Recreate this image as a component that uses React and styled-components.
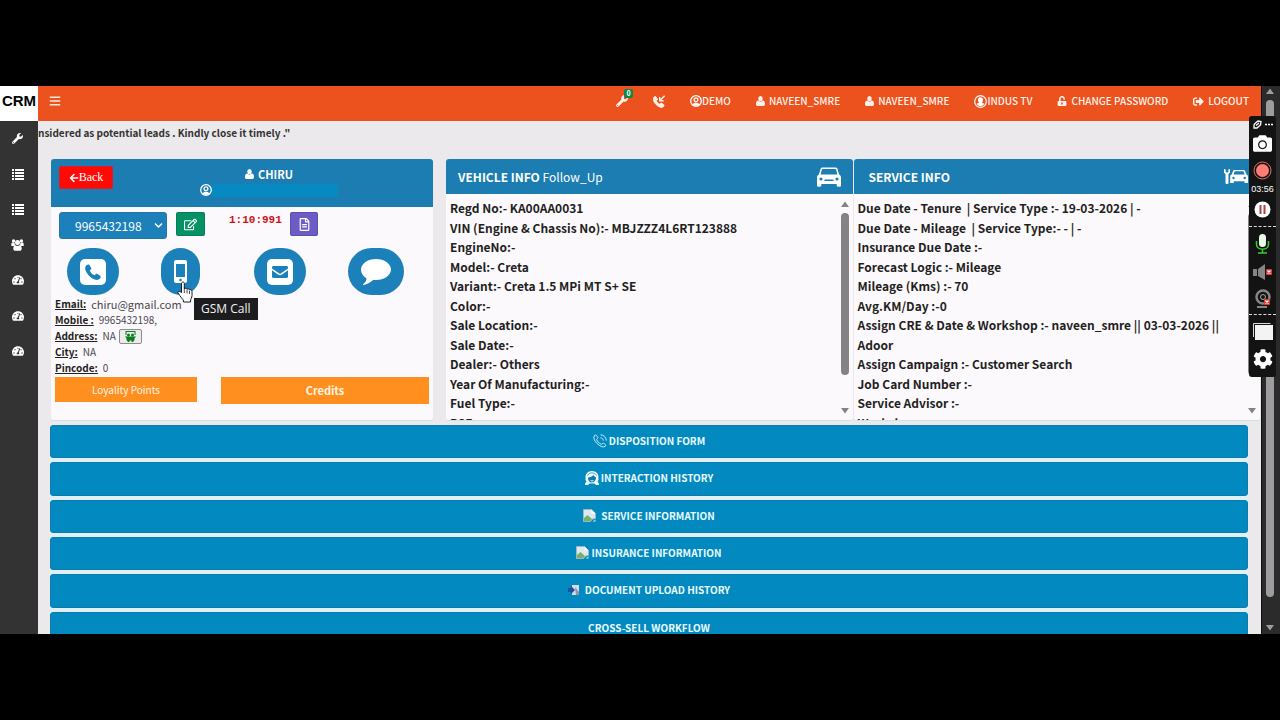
import React from 'react';
import styled, { createGlobalStyle, ThemeProvider } from 'styled-components';
import {
  FaArrowLeft,
  FaBars,
  FaCamera,
  FaCog,
  FaRegEdit,
  FaRegFileAlt,
  FaSignOutAlt,
  FaTachometerAlt,
  FaUnlockAlt,
  FaWrench,
} from 'react-icons/fa';

const theme = {
  colours: {
    Brand: '#eb521e',
    Panel: '#1b7db1',
    Bar: '#0289bf',
    Action: '#1c80ba',
    Orange: '#ff9020',
    Page: '#ebe9eb',
    Card: '#fcf9fc',
    Dark: '#333333',
    TextDark: '#1f1f22',
    TextLight: '#ffffff',
  },
  fonts: {
    Body: `'Noto Sans CJK JP', 'Noto Sans', sans-serif`,
  },
};

const GlobalStyle = createGlobalStyle`
  * {
    box-sizing: border-box;
  }
  body {
    margin: 0;
    background: #000;
    font-family: ${theme.fonts.Body};
    font-size: 12px;
    color: ${theme.colours.TextDark};
  }
  button, select {
    font-family: inherit;
    margin: 0;
  }
  svg {
    display: block;
    flex: none;
  }
`;

const Letterbox = styled.div`
  height: 100vh;
  padding: 86px 0;
  background: #000;
`;

const Screen = styled.div`
  position: relative;
  display: grid;
  grid-template-columns: 38px 1fr 19px;
  grid-template-rows: minmax(0, 1fr);
  height: 100%;
  overflow: hidden;
  background: ${props => props.theme.colours.Page};
`;

/* left rail */
const Sidebar = styled.aside`
  display: flex;
  flex-direction: column;
  background: ${props => props.theme.colours.Dark};
`;

const Logo = styled.a`
  height: 35px;
  line-height: 30px;
  background: #fff;
  color: #000;
  font-family: 'Liberation Sans', Arial, sans-serif;
  font-size: 15px;
  font-weight: bold;
  text-align: center;
  text-decoration: none;
`;

const SideLinks = styled.nav`
  display: grid;
  grid-auto-rows: 1fr;
  height: 248px;
  padding-right: 3px;
`;

const SideLink = styled.a`
  display: flex;
  justify-content: center;
  align-items: center;
  color: #fff;
`;

/* top bar */
const Main = styled.main`
  display: flex;
  flex-direction: column;
  min-width: 0;
  overflow: hidden;
`;

const TopBar = styled.header`
  flex: none;
  display: flex;
  justify-content: space-between;
  align-items: center;
  height: 35px;
  padding: 0 12px 5px 11px;
  background: ${props => props.theme.colours.Brand};
`;

const MenuButton = styled.button`
  padding: 0;
  border: 0;
  background: none;
  color: #ffe9df;
`;

const Nav = styled.nav`
  display: flex;
  align-items: center;
  gap: 25px;
`;

const NavLink = styled.a`
  position: relative;
  display: flex;
  align-items: center;
  gap: ${props => (props.$tight ? '0' : '4px')};
  color: #fff1ea;
  font-size: 10px;
  font-weight: 500;
  line-height: 20px;
  white-space: nowrap;
  text-decoration: none;
`;

const Badge = styled.span`
  position: absolute;
  top: -6px;
  right: -5px;
  width: 9px;
  height: 9px;
  border-radius: 2px;
  background: #108548;
  color: #fff;
  font-size: 7px;
  font-weight: bold;
  line-height: 9px;
  text-align: center;
`;

const Marquee = styled.div`
  flex: none;
  height: 38px;
  overflow: hidden;
  p {
    margin: 0;
    font-size: 10px;
    font-weight: bold;
    line-height: 24px;
    white-space: nowrap;
    color: #333;
  }
`;

/* cards */
const Cards = styled.div`
  flex: none;
  display: grid;
  grid-template-columns: 382fr 814fr;
  grid-template-rows: minmax(0, 1fr);
  gap: 13px;
  height: 262px;
  padding: 0 1px 0 13px;
`;

const Card = styled.section`
  display: flex;
  flex-direction: column;
  min-width: 0;
  overflow: hidden;
  border-radius: 3px;
  background: ${props => props.theme.colours.Card};
  border-bottom: 1px solid #cfdfe2;
`;

const CustomerHead = styled.div`
  display: grid;
  grid-template-columns: 54px 1fr;
  align-items: start;
  height: 48px;
  padding: 7px 8px 0;
  background: ${props => props.theme.colours.Panel};
  color: ${props => props.theme.colours.TextLight};
`;

const BackButton = styled.button`
  display: flex;
  justify-content: center;
  align-items: center;
  height: 23px;
  padding: 0;
  border: 1px solid #d3202a;
  border-radius: 2px;
  background: #ff0a05;
  color: #fff;
  && {
    font-family: 'Liberation Serif', serif;
  }
  font-size: 12px;
`;

const CustomerName = styled.div`
  display: flex;
  flex-direction: column;
  align-items: center;
  h1 {
    display: flex;
    align-items: center;
    gap: 4px;
    margin: 0;
    font-size: 11px;
    line-height: 16px;
  }
`;

const Masked = styled.div`
  display: flex;
  align-items: center;
  height: 16px;
  &::after {
    content: '';
    width: 126px;
    height: 13px;
    background: #078ac1;
  }
`;

const CustomerBody = styled.div`
  padding: 5px 4px 0;
`;

const CallRow = styled.div`
  display: flex;
  align-items: flex-start;
  padding-left: 4px;
`;

const NumberBox = styled.div`
  position: relative;
  color: #fff;
  svg {
    position: absolute;
    right: 4px;
    top: 10px;
    pointer-events: none;
  }
`;

const NumberSelect = styled.select`
  appearance: none;
  display: block;
  width: 108px;
  height: 27px;
  padding: 0 15px;
  border: 1px solid #2575ab;
  border-radius: 3px;
  background: ${props => props.theme.colours.Action};
  color: #fff;
  font-size: 12px;
`;

const SquareButton = styled.button`
  display: flex;
  justify-content: center;
  align-items: center;
  width: ${props => props.$width || 28}px;
  height: 24px;
  margin-left: 9px;
  padding: 0;
  border: 1px solid #00000022;
  border-radius: 2px;
  background: ${props => props.$colour};
  color: #fff;
`;

const Timer = styled.span`
  margin-left: 24px;
  width: 52px;
  color: #d01016;
  font-family: 'Liberation Mono', monospace;
  font-size: 11px;
  font-weight: bold;
  line-height: 16px;
  white-space: nowrap;
`;

const Channels = styled.div`
  display: grid;
  grid-template-columns: repeat(4, 1fr);
  justify-items: start;
  margin: 9px -12px 1px 0;
  padding-left: 12px;
`;

const ChannelButton = styled.button`
  display: flex;
  justify-content: center;
  align-items: center;
  height: 47px;
  padding: 0 13px;
  border: 0;
  border-radius: 24px;
  background: ${props => props.theme.colours.Action};
  color: #fff;
`;

const Details = styled.dl`
  margin: 0;
  font-size: 10px;
  line-height: 16px;
  div {
    display: flex;
    gap: 5px;
  }
  dt {
    font-weight: bold;
    text-decoration: underline;
  }
  dd {
    display: flex;
    align-items: center;
    gap: 3px;
    margin: 0;
    color: #48484c;
  }
`;

const Email = styled.span`
  font-size: 11px;
`;

const AddressButton = styled.button`
  display: flex;
  justify-content: center;
  align-items: center;
  width: 23px;
  height: 15px;
  padding: 0;
  border: 1px solid #8c8c8c;
  border-radius: 2px;
  background: #ececec;
`;

const Offers = styled.div`
  display: grid;
  grid-template-columns: 142fr 208fr;
  gap: 24px;
  align-items: start;
  margin-top: 1px;
`;

const OfferButton = styled.button`
  height: ${props => (props.$strong ? '27px' : '25px')};
  padding: 0 0 1px;
  border: 0;
  background: ${props => props.theme.colours.Orange};
  color: #fff4e2;
  font-size: ${props => (props.$strong ? '11px' : '10px')};
  font-weight: ${props => (props.$strong ? 'bold' : 'normal')};
`;

const InfoCards = styled.div`
  display: grid;
  grid-template-columns: 1fr 1fr;
  grid-template-rows: minmax(0, 1fr);
  gap: 1px;
  min-width: 0;
`;

const InfoHead = styled.div`
  flex: none;
  display: flex;
  justify-content: space-between;
  align-items: center;
  height: 35px;
  padding: 0 12px 0 ${props => (props.$wide ? '15px' : '12px')};
  background: ${props => props.theme.colours.Panel};
  color: #fff;
  h2 {
    margin: 0;
    font-size: 12px;
    line-height: 20px;
  }
  small {
    font-size: 12px;
    font-weight: normal;
  }
`;

const InfoBody = styled.div`
  flex: 1;
  display: flex;
  min-height: 0;
`;

const InfoList = styled.ul`
  flex: 1;
  display: grid;
  grid-auto-rows: 1fr;
  height: 234px;
  margin: 4px 0 0;
  padding: 0 0 0 4px;
  list-style: none;
  font-size: 12px;
  font-weight: bold;
  white-space: pre-wrap;
`;

const InfoItem = styled.li`
  grid-row: span ${props => props.$rows || 1};
  line-height: ${props => (props.$rows ? '20px' : '19px')};
`;

const Scrollbar = styled.div`
  display: flex;
  flex-direction: column;
  align-items: center;
  width: 16px;
  padding: 7px 0 6px;
  gap: 6px;
  color: #858285;
  span {
    flex: none;
    width: 8px;
    height: 162px;
    border-radius: 4px;
    background: currentColor;
  }
  svg:last-child {
    margin-top: auto;
  }
`;

/* accordion */
const Sections = styled.div`
  flex: none;
  display: grid;
  grid-auto-rows: 1fr;
  gap: 4px;
  height: 220px;
  margin: 4px 13px 0 12px;
  border-radius: 3px;
  background: #dff0f9;
`;

const SectionButton = styled.button`
  display: flex;
  justify-content: center;
  align-items: center;
  gap: ${props => (props.$spaced ? '5px' : '2px')};
  padding: 0 0 2px;
  border: 1px solid #0b7dac;
  border-radius: 3px;
  background: ${props => props.theme.colours.Bar};
  color: #e9fbff;
  font-size: 10px;
  font-weight: bold;
`;

const PageScroll = styled.div`
  display: flex;
  flex-direction: column;
  align-items: center;
  gap: 6px;
  padding: 2px 4px 3px 1px;
  border-left: 1px solid #0c0c0c;
  background: #2b2b2b;
  color: #9e9c9e;
  span {
    flex: none;
    width: 8px;
    height: 497px;
    border-radius: 4px;
    background: currentColor;
  }
  svg:last-child {
    margin-top: auto;
  }
`;

/* floating things */
const Recorder = styled.div`
  position: absolute;
  top: 30px;
  right: 4px;
  display: flex;
  flex-direction: column;
  align-items: center;
  width: 27px;
  height: 261px;
  padding-top: 3px;
  border-radius: 3px;
  background: #131313;
  color: #fff;
  hr {
    width: 100%;
    margin: 4px 0;
    border: 0;
    border-top: 1px dashed #ddd;
  }
  time {
    font-family: 'Liberation Sans', Arial, sans-serif;
    font-size: 9px;
    line-height: 13px;
  }
`;

const RecorderButton = styled.button`
  display: flex;
  justify-content: center;
  align-items: center;
  width: 27px;
  height: ${props => props.$height}px;
  padding: 0;
  border: 0;
  background: none;
  color: #fff;
`;

const Pointer = styled.div`
  position: absolute;
  left: 176px;
  top: 195px;
`;

const Tooltip = styled.div`
  position: absolute;
  left: 194px;
  top: 212px;
  padding: 0 7px;
  background: #1d1d1f;
  color: #f2f2f2;
  font-family: 'Open Sans', sans-serif;
  font-size: 12px;
  line-height: 22px;
`;

const ListIcon = () => (
  <svg width='12' height='11' viewBox='0 0 12 11' fill='currentColor'>
    {[0, 3, 6, 9].map(y => (
      <g key={y}>
        <rect x='0' y={y} width='2' height='2' />
        <rect x='3' y={y} width='9' height='2' />
      </g>
    ))}
  </svg>
);

const TeamIcon = () => (
  <svg width='13' height='12' viewBox='0 0 13 12' fill='currentColor'>
    <circle cx='2.600' cy='2' r='1.700' />
    <circle cx='10.400' cy='2' r='1.700' />
    <circle cx='6.500' cy='3.500' r='2.500' />
    <path d='M.3 7V5c0-1 .6-1.500 1.200-1.500L3.600 4c0 1.300.4 2 1 2.500L3 7zM12.700 7V5c0-1-.6-1.500-1.200-1.500L9.400 4c0 1.300-.4 2-1 2.500L10 7z' />
    <path d='M4.500 6.200c1.200.8 2.800.8 4 0 1.500 0 2.200 1.500 2.200 3.300 0 1.500-.7 2.300-1.900 2.300H4.200c-1.200 0-1.900-.8-1.900-2.300 0-1.800.7-3.300 2.200-3.300z' />
  </svg>
);

const UserIcon = ({ size }) => (
  <svg width={size} height={size + 1} viewBox='0 0 10 11' fill='currentColor'>
    <ellipse cx='5' cy='2.900' rx='2.500' ry='2.900' />
    <path d='M2.600 5c1.300 1.600 3.500 1.600 4.800 0C9.300 5.200 10 6.700 10 8.700c0 1.500-.8 2.300-2 2.300H2c-1.200 0-2-.8-2-2.300C0 6.700.7 5.200 2.600 5z' />
  </svg>
);

const Arrow = ({ up }) => (
  <svg width='8' height='6' viewBox='0 0 8 6' fill='currentColor'>
    <path d={up ? 'M4 0.5 8 6H0z' : 'M0 0h8L4 5.5z'} />
  </svg>
);

const handset =
  'M5.500 7.500c.8-2 3.200-2.600 3.900-1.600l1.900 3.200c.3.900-.4 1.500-1.500 2.400.8 2.200 2.600 4 4.800 4.800.9-1.100 1.500-1.800 2.400-1.500l3.200 1.900c1 .7.400 3.100-1.600 3.900C13.500 23 3.200 12.500 5.500 7.500z';

const PhoneSquareIcon = () => (
  <svg width='26' height='26' viewBox='0 0 26 26'>
    <rect width='26' height='26' rx='5' fill='#fff' />
    <path d={handset} fill='#1c80ba' />
  </svg>
);

const IncomingIcon = () => (
  <svg width='12' height='13' viewBox='5 3.500 17 18' fill='none' stroke='currentColor'>
    <path d={handset} fill='currentColor' />
    <path d='M21.500 4.500l-6 6M14.500 6v5.500H20' strokeWidth='2' />
  </svg>
);

const MobileIcon = () => (
  <svg width='13' height='23' viewBox='0 0 13 23' fill='none'>
    <rect width='13' height='23' rx='2' fill='#fff' />
    <rect x='2' y='4' width='9' height='13' fill='#1c80ba' />
    <circle cx='6.5' cy='20' r='1.3' fill='#1c80ba' />
  </svg>
);

const MailSquareIcon = () => (
  <svg width='26' height='26' viewBox='0 0 26 26'>
    <rect width='26' height='26' rx='5' fill='#fff' />
    <path d='M5 9.500v-1C5 7.500 5.700 7 6.500 7h13c.8 0 1.500.5 1.500 1.500v1l-6.500 4.600c-1 .7-2 .7-3 0z' fill='#1c80ba' />
    <path d='M5 11.200l6 4.300c1.300.9 2.700.9 4 0l6-4.300v6.300c0 .8-.7 1.500-1.500 1.500h-13c-.8 0-1.500-.7-1.500-1.500z' fill='#1c80ba' />
  </svg>
);

const CommentIcon = () => (
  <svg width='30' height='26' viewBox='0 0 30 26' fill='#fff'>
    <path d='M15 0c8.300 0 15 4.700 15 10.500S23.300 21 15 21c-.9 0-1.800 0-2.600-.2C9.800 23.500 6.500 25.300 2.600 26c-.6 0-.8-.7-.3-1.100 1.800-1.500 3-3 3.300-5.500C2.200 17.400 0 14.200 0 10.500 0 4.700 6.700 0 15 0z' />
  </svg>
);

const CarIcon = () => (
  <svg width='24' height='20' viewBox='0 0 24 20'>
    <path
      d='M5.500 0.5h13c1 0 1.700.5 2 1.500l1.600 5.500c1.200.6 1.900 1.500 1.900 2.800V18.500c0 .8-.5 1.200-1.200 1.200h-1.800c-.8 0-1.300-.5-1.300-1.200V17H4.300v1.500c0 .7-.5 1.200-1.300 1.200H1.200C.5 19.700 0 19.300 0 18.500v-8.200C0 9 .7 8.100 1.900 7.500L3.500 2c.3-1 1-1.500 2-1.500z'
      fill='#fff'
    />
    <path d='M5.600 2h12.800c.4 0 .6.200.7.6L20.400 7.500H3.600l1.300-4.900c.1-.4.300-.6.700-.6z' fill='#1b7db1' />
    <circle cx='4' cy='12' r='1.600' fill='#1b7db1' />
    <circle cx='20' cy='12' r='1.600' fill='#1b7db1' />
    <path d='M7.500 12.500h9v1.500h-9z' fill='#1b7db1' />
  </svg>
);

const ServiceCarIcon = () => (
  <svg width='24' height='15' viewBox='0 0 24 15'>
    <path
      d='M0 0v3.500l1.500 1.800V14c0 1.300 3 1.300 3 0V5.300L6 3.500V0L4.300.5v2.700H1.700V.5z'
      fill='#fff'
    />
    <path
      d='M10.500 1h9c.8 0 1.300.3 1.600 1l1.300 3.500c1 .4 1.600 1.200 1.600 2.200V14h-3.500v-1.800H9.700V14H6.200V7.700c0-1 .5-1.800 1.500-2.200L9 2c.3-.7.8-1 1.500-1z'
      fill='#fff'
    />
    <path d='M10.700 2.200h8.700l1.300 3.300H9.500z' fill='#1b7db1' />
    <circle cx='9.500' cy='9' r='1.200' fill='#1b7db1' />
    <circle cx='20.700' cy='9' r='1.200' fill='#1b7db1' />
  </svg>
);

const ChevronIcon = () => (
  <svg width='9' height='7' viewBox='0 0 9 7' fill='none' stroke='#fff' strokeWidth='1.500'>
    <path d='M1 1.500l3.500 3.500L8 1.500' />
  </svg>
);

const ShopIcon = () => (
  <svg width='11' height='11' viewBox='0 0 11 11' fill='#0a7d1c'>
    <path d='M0.500 0h10v4h-1V1h-8v3h-1z' />
    <circle cx='3.500' cy='4' r='1.500' />
    <circle cx='7.500' cy='4' r='1.500' />
    <path d='M0 5.500h11L9.500 7.500V9L8 11H6.500V9.500h-2V11H3L1.500 9V7.500z' />
  </svg>
);

const AccountIcon = ({ size = 13 }) => (
  <svg width={size} height={size} viewBox='0 0 13 13'>
    <circle cx='6.500' cy='6.500' r='5.800' fill='none' stroke='#fff' strokeWidth='1.200' />
    <path
      d='M6.500 2.300c1.600 0 2.500 1.100 2.500 2.600 0 1-.4 1.900-1 2.400.1.700 1 .9 2.300 1.500-.8 1.700-2.200 2.400-3.800 2.400S3.500 10.500 2.700 8.800C4 8.200 4.900 8 5 7.300c-.6-.5-1-1.400-1-2.400 0-1.500.9-2.600 2.500-2.600z'
      fill='#fff'
    />
  </svg>
);

const ProfileIcon = () => (
  <svg width='12' height='12' viewBox='0 0 12 12' fill='none' stroke='#fff' strokeWidth='1.300'>
    <circle cx='6' cy='6' r='5.300' />
    <circle cx='6' cy='4.800' r='1.900' />
    <path d='M2.300 9.500C4 7.300 8 7.300 9.700 9.500L6 11z' fill='#fff' stroke='none' />
  </svg>
);

const RingIcon = () => (
  <svg width='14' height='14' viewBox='0 0 14 14' fill='none' stroke='#cdf1ff'>
    <path d='M1.500 1.500C3 .3 4.200 2 4.800 3.500c.2.800-.8 1.200-1.200 1.800.4 2 2.800 4.400 4.800 5 .8-.3 1.200-1.300 2-1 1.400.5 3 1.600 1.900 3C8.500 15.500-1.800 5.800 1.500 1.500z' />
    <path d='M7.500 3.800c1.700.1 2.700 1.200 2.800 2.800M7.500.8c3.400.1 5.600 2.400 5.800 5.800' />
  </svg>
);

const AgentIcon = () => (
  <svg width='14' height='14' viewBox='0 0 14 14'>
    <path d='M7 0c4 0 6.500 2.800 6.500 6.300V9l-1 1.500 1.500 2V14h-3l-1.500-1.500h-5L3 14H0v-1.500l1.500-2L.5 9V6.300C.5 2.800 3 0 7 0z' fill='#e9fbff' />
    <path d='M3 6.500C5 6.300 7.500 5.300 8.500 4c.5 1.300 1.300 2 2.500 2.300 0 3-1.500 5.200-4 5.200S3 9.500 3 6.500z' fill='#1477ad' />
    <path d='M5.500 9.500q1.500 1 3 0' stroke='#e9fbff' fill='none' />
    <path d='M2.500 4.500C4 1 10 1 11.500 4.500' stroke='#1477ad' fill='none' strokeWidth='0.700' />
  </svg>
);

const BrokenIcon = () => (
  <svg width='13' height='13' viewBox='0 0 13 13'>
    <path d='M.5.500h8l4 4v5l-3 .5-2 2.500h-7z' fill='#dce9f5' stroke='#a8b5bd' />
    <path d='M8.500.500v4h4z' fill='#fff' />
    <path d='M1 9l3.500-3L9 10l-1.500 2H1z' fill='#74b266' />
    <path d='M9.500 12.500l3-2v2z' fill='#c8e7cd' />
  </svg>
);

const UploadIcon = () => (
  <svg width='12' height='12' viewBox='0 0 12 12'>
    <path d='M4 1h7v10H4z' fill='#d4dbe8' />
    <path d='M7 3l4 5v3H8z' fill='#9294a8' />
    <path d='M0 4h3V2l4 4-4 4V8H0z' fill='#1c519b' />
  </svg>
);

const HandIcon = () => (
  <svg width='18' height='22' viewBox='0 0 18 22'>
    <path
      d='M5.500 11.500V2.500c0-2 2.800-2 2.800 0V8c.5-1.200 2.500-1 2.700.4.600-1 2.300-.7 2.500.6.700-.7 2.500-.4 2.500 1.300v4.200c0 2-1.500 3.500-1.500 5.500v1H7.500v-1c0-1.500-3.500-4.500-5.500-8-.7-1.500 1.500-2.300 3.500-.5z'
      fill='#fff'
      stroke='#1a1a1a'
    />
    <path d='M8.300 8v4M11 9v3.500M13.500 10v3' stroke='#1a1a1a' strokeWidth='0.800' />
  </svg>
);

const CrossMark = ({ x, y }) => (
  <g>
    <rect x={x} y={y} width='6' height='6' rx='1' fill='#d83a35' />
    <path
      d={`M${x + 1.5} ${y + 1.5}l3 3m0-3l-3 3`}
      stroke='#fff'
      strokeWidth='1.200'
    />
  </g>
);

const vehicleInfo = [
  'Regd No:- KA00AA0031',
  'VIN (Engine & Chassis No):- MBJZZZ4L6RT123888',
  'EngineNo:-',
  'Model:- Creta',
  'Variant:- Creta 1.5 MPi MT S+ SE',
  'Color:-',
  'Sale Location:-',
  'Sale Date:-',
  'Dealer:- Others',
  'Year Of Manufacturing:-',
  'Fuel Type:-',
  'PSF:-',
];

const serviceInfo = [
  'Due Date - Tenure  | Service Type :- 19-03-2026 | -',
  'Due Date - Mileage  | Service Type:- - | -',
  'Insurance Due Date :-',
  'Forecast Logic :- Mileage',
  'Mileage (Kms) :- 70',
  'Avg.KM/Day :-0',
  'Assign CRE & Date & Workshop :- naveen_smre || 03-03-2026 || Adoor',
  'Assign Campaign :- Customer Search',
  'Job Card Number :-',
  'Service Advisor :-',
  'Workshop :-',
];

const sections = [
  { title: 'DISPOSITION FORM', icon: <RingIcon /> },
  { title: 'INTERACTION HISTORY', icon: <AgentIcon /> },
  { title: 'SERVICE INFORMATION', icon: <BrokenIcon />, spaced: true },
  { title: 'INSURANCE INFORMATION', icon: <BrokenIcon /> },
  { title: 'DOCUMENT UPLOAD HISTORY', icon: <UploadIcon />, spaced: true },
  { title: 'CROSS-SELL WORKFLOW' },
];

const InfoCard = ({ title, note, icon, items, wide }) => (
  <Card>
    <InfoHead $wide={wide}>
      <h2>
        {title} {note && <small>{note}</small>}
      </h2>
      {icon}
    </InfoHead>
    <InfoBody>
      <InfoList>
        {items.map(item => (
          <InfoItem key={item} $rows={item.length > 60 ? 2 : undefined}>
            {item}
          </InfoItem>
        ))}
      </InfoList>
      <Scrollbar>
        <Arrow up />
        <span />
        <Arrow />
      </Scrollbar>
    </InfoBody>
  </Card>
);

const CustomerCard = () => (
  <Card>
    <CustomerHead>
      <BackButton>
        <FaArrowLeft size={10} />
        Back
      </BackButton>
      <CustomerName>
        <h1>
          <UserIcon size={9} /> CHIRU
        </h1>
        <Masked>
          <ProfileIcon />
        </Masked>
      </CustomerName>
    </CustomerHead>
    <CustomerBody>
      <CallRow>
        <NumberBox>
          <NumberSelect aria-label='Phone number'>
            <option>9965432198</option>
          </NumberSelect>
          <ChevronIcon />
        </NumberBox>
        <SquareButton $colour='#049163' $width={29} aria-label='Edit number'>
          <FaRegEdit size={13} />
        </SquareButton>
        <Timer>1:10:991</Timer>
        <SquareButton $colour='#6d5bc6' aria-label='Notes'>
          <FaRegFileAlt size={13} />
        </SquareButton>
      </CallRow>
      <Channels>
        <ChannelButton aria-label='Call'>
          <PhoneSquareIcon />
        </ChannelButton>
        <ChannelButton aria-label='GSM Call'>
          <MobileIcon />
        </ChannelButton>
        <ChannelButton aria-label='Email'>
          <MailSquareIcon />
        </ChannelButton>
        <ChannelButton aria-label='Message'>
          <CommentIcon />
        </ChannelButton>
      </Channels>
      <Details>
        <div>
          <dt>Email:</dt>
          <dd>
            <Email>chiru@gmail.com</Email>
          </dd>
        </div>
        <div>
          <dt>Mobile :</dt>
          <dd>9965432198,</dd>
        </div>
        <div>
          <dt>Address:</dt>
          <dd>
            NA
            <AddressButton aria-label='Address book'>
              <ShopIcon />
            </AddressButton>
          </dd>
        </div>
        <div>
          <dt>City:</dt>
          <dd>NA</dd>
        </div>
        <div>
          <dt>Pincode:</dt>
          <dd>0</dd>
        </div>
      </Details>
      <Offers>
        <OfferButton>Loyality Points</OfferButton>
        <OfferButton $strong>Credits</OfferButton>
      </Offers>
    </CustomerBody>
  </Card>
);

const RecorderPanel = () => (
  <Recorder>
    <RecorderButton $height={10} aria-label='Options'>
      <svg width='20' height='9' viewBox='0 0 20 9' fill='none' stroke='#fff'>
        <path d='M2 3.500L5 1l3 .500-.5 3.500L4 8H1V5zM3 5.500l3-2.500' strokeWidth='1.300' />
        <path d='M12 4.500h8' strokeWidth='1.500' strokeDasharray='2 1' />
      </svg>
    </RecorderButton>
    <RecorderButton $height={29} aria-label='Screenshot'>
      <FaCamera size={19} />
    </RecorderButton>
    <RecorderButton $height={25} aria-label='Record'>
      <svg width='19' height='19' viewBox='0 0 19 19'>
        <circle cx='9.500' cy='9.500' r='8.500' fill='none' stroke='#e5726a' />
        <circle cx='9.500' cy='9.500' r='6.500' fill='#ff7d75' />
      </svg>
    </RecorderButton>
    <time>03:56</time>
    <RecorderButton $height={26} aria-label='Pause'>
      <svg width='17' height='17' viewBox='0 0 17 17'>
        <circle cx='8.500' cy='8.500' r='8' fill='#fff' />
        <path d='M6.500 4v9M10.500 4v9' stroke='#a3443f' strokeWidth='2' />
      </svg>
    </RecorderButton>
    <hr />
    <RecorderButton $height={26} aria-label='Microphone'>
      <svg width='15' height='20' viewBox='0 0 15 20' fill='none'>
        <rect x='4' y='0' width='7' height='13' rx='3.500' fill='#e8fbe5' />
        <path d='M1.500 7v3c0 7 12 7 12 0V7M7.500 15.500V19M3 19h9' stroke='#3ecb35' strokeWidth='1.500' />
      </svg>
    </RecorderButton>
    <RecorderButton $height={29} aria-label='Speaker'>
      <svg width='20' height='16' viewBox='0 0 20 16'>
        <path d='M0 5h4v7H0zM5 5l7-5v16l-7-4z' fill='#858585' />
        <CrossMark x={13} y={5} />
      </svg>
    </RecorderButton>
    <RecorderButton $height={24} aria-label='Webcam'>
      <svg width='18' height='19' viewBox='0 0 18 19' fill='none'>
        <circle cx='9' cy='8' r='6.500' stroke='#858585' strokeWidth='2.500' />
        <circle cx='9' cy='8' r='2.500' stroke='#aaa' />
        <path d='M3 18h10' stroke='#858585' strokeWidth='2' />
        <CrossMark x={10} y={10} />
      </svg>
    </RecorderButton>
    <hr />
    <RecorderButton $height={24} aria-label='Windows'>
      <svg width='20' height='17' viewBox='0 0 20 17'>
        <path d='M.500 14V.500h17' fill='none' stroke='#ddd' />
        <rect x='2' y='2' width='18' height='15' fill='#f3f3f3' />
      </svg>
    </RecorderButton>
    <RecorderButton $height={32} aria-label='Settings'>
      <FaCog size={20} />
    </RecorderButton>
  </Recorder>
);

const App = () => {
  return (
    <ThemeProvider theme={theme}>
      <GlobalStyle />
      <Letterbox>
        <Screen>
          <Sidebar>
            <Logo href='#home'>CRM</Logo>
            <SideLinks>
              <SideLink href='#tools' aria-label='Tools'>
                <FaWrench size={11} />
              </SideLink>
              <SideLink href='#calls' aria-label='Calls'>
                <ListIcon />
              </SideLink>
              <SideLink href='#leads' aria-label='Leads'>
                <ListIcon />
              </SideLink>
              <SideLink href='#team' aria-label='Team'>
                <TeamIcon />
              </SideLink>
              {['sales', 'service', 'insurance'].map(name => (
                <SideLink key={name} href={`#${name}`} aria-label={name}>
                  <FaTachometerAlt size={12} />
                </SideLink>
              ))}
            </SideLinks>
          </Sidebar>
          <Main>
            <TopBar>
              <MenuButton aria-label='Menu'>
                <FaBars size={12} />
              </MenuButton>
              <Nav>
                <NavLink href='#jobs'>
                  <FaWrench size={12} />
                  <Badge>0</Badge>
                </NavLink>
                <NavLink href='#incoming' aria-label='Incoming calls'>
                  <IncomingIcon />
                </NavLink>
                <NavLink href='#demo' $tight>
                  <ProfileIcon />
                  DEMO
                </NavLink>
                <NavLink href='#user'>
                  <UserIcon size={9} />
                  NAVEEN_SMRE
                </NavLink>
                <NavLink href='#manager'>
                  <UserIcon size={9} />
                  NAVEEN_SMRE
                </NavLink>
                <NavLink href='#tv' $tight>
                  <AccountIcon />
                  INDUS TV
                </NavLink>
                <NavLink href='#password'>
                  <FaUnlockAlt size={10} />
                  CHANGE PASSWORD
                </NavLink>
                <NavLink href='#logout'>
                  <FaSignOutAlt size={11} />
                  LOGOUT
                </NavLink>
              </Nav>
            </TopBar>
            <Marquee>
              <p>nsidered as potential leads . Kindly close it timely ."</p>
            </Marquee>
            <Cards>
              <CustomerCard />
              <InfoCards>
                <InfoCard
                  title='VEHICLE INFO'
                  note='Follow_Up'
                  icon={<CarIcon />}
                  items={vehicleInfo}
                />
                <InfoCard
                  title='SERVICE INFO'
                  icon={<ServiceCarIcon />}
                  items={serviceInfo}
                  wide
                />
              </InfoCards>
            </Cards>
            <Sections>
              {sections.map(section => (
                <SectionButton key={section.title} $spaced={section.spaced}>
                  {section.icon}
                  {section.title}
                </SectionButton>
              ))}
            </Sections>
          </Main>
          <PageScroll>
            <Arrow up />
            <span />
            <Arrow />
          </PageScroll>
          <Tooltip role='tooltip'>GSM Call</Tooltip>
          <Pointer>
            <HandIcon />
          </Pointer>
          <RecorderPanel />
        </Screen>
      </Letterbox>
    </ThemeProvider>
  );
};

export default App;
